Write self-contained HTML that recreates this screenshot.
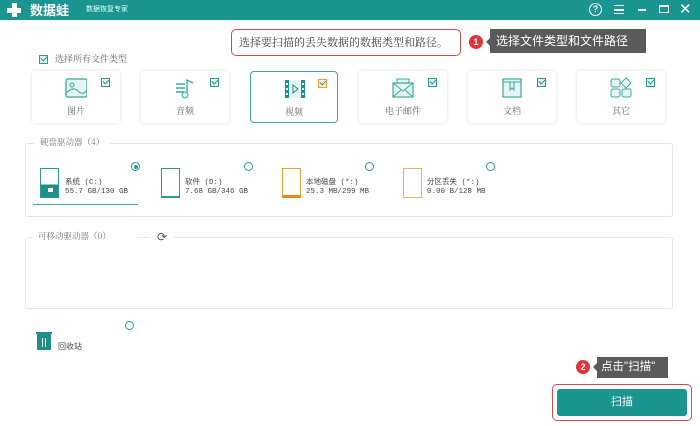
<!DOCTYPE html>
<html><head><meta charset="utf-8"><style>
*{margin:0;padding:0;box-sizing:border-box}
body{width:700px;height:426px;background:#fff;font-family:"Liberation Sans","Noto Sans CJK SC",sans-serif;position:relative;overflow:hidden;color:#555}
.a{position:absolute}
.tb{left:0;top:0;width:700px;height:20px;background:#1a958f}
.card{position:absolute;top:71px;width:88px;height:52px;border-radius:4px;box-shadow:0 0 4px rgba(0,0,0,.12);background:#fff}
.card .lb{position:absolute;left:0;right:0;top:33px;text-align:center;font-size:9px;color:#666;font-family:"Noto Serif CJK SC",serif}
.cb{position:absolute;right:10px;top:7px;width:9px;height:9px;border:1px solid #2a9a94;background:#dff2f0}
.cb:after{content:"";position:absolute;left:1px;top:0px;width:5px;height:3px;border-left:1.3px solid #2a8a84;border-bottom:1.3px solid #2a8a84;transform:rotate(-45deg)}
.ic{position:absolute;left:33px;top:6px;width:22px;height:22px}
.sec{position:absolute;border:1px solid #e6e6e6;border-radius:3px}
.st{position:absolute;background:#fff;font-size:8.5px;color:#777;padding:0 6px;font-family:"Noto Serif CJK SC",serif}
.rad{position:absolute;width:9px;height:9px;border:1px solid #2a9a94;border-radius:50%;background:#fff}
.dr{position:absolute;width:19px;height:30px;border:1px solid #2a9a94}
.dn{position:absolute;font-size:7.5px;color:#444;font-family:"Liberation Mono","Noto Sans CJK SC",monospace}
</style></head><body>
<div class="a tb"></div>
<div class="a" style="left:7px;top:3px;width:14px;height:14px">
<div class="a" style="left:5px;top:0;width:5px;height:14px;background:#fff"></div>
<div class="a" style="left:0;top:5px;width:14px;height:5px;background:#fff"></div></div>
<div class="a" style="left:30px;top:1px;color:#fff;font-size:13px;font-weight:bold;font-family:'Noto Sans CJK SC',sans-serif;line-height:17px">数据蛙</div>
<div class="a" style="left:86px;top:4px;color:#dff;font-size:7px;line-height:12px">数据恢复专家</div>
<div class="a" style="left:589px;top:3px;width:13px;height:13px;border:1.5px solid #fff;border-radius:50%;color:#fff;font-size:9px;text-align:center;line-height:10px;font-weight:bold">?</div>
<div class="a" style="left:614px;top:5px;width:10px;height:9px;border-top:1.5px solid #fff;border-bottom:1.5px solid #fff"></div>
<div class="a" style="left:614px;top:9px;width:10px;height:1.5px;background:#fff"></div>
<div class="a" style="left:638px;top:9px;width:8px;height:1.5px;background:#fff"></div>
<div class="a" style="left:659px;top:5px;width:10px;height:8px;border:1.5px solid #fff;border-top-width:2.5px"></div>
<div class="a" style="left:679px;top:0px;color:#fff;font-size:15px;line-height:19px">✕</div>

<div class="a" style="left:231px;top:29px;width:230px;height:27px;border:1.3px solid #d9484c;border-radius:5px;font-size:11px;color:#444;line-height:24px;padding-left:7px;font-family:'Noto Serif CJK SC',serif">选择要扫描的丢失数据的数据类型和路径。</div>
<div class="a" style="left:469px;top:35px;width:14px;height:14px;border-radius:50%;background:#e2343a;color:#fff;font-size:9px;text-align:center;line-height:14px;font-weight:bold">1</div>
<div class="a" style="left:486px;top:37px;border:5px solid transparent;border-right-color:#5a5a5a;border-left:0"></div>
<div class="a" style="left:490px;top:29px;width:156px;height:24px;background:#5a5a5a;color:#fff;font-size:12px;line-height:24px;padding-left:6px">选择文件类型和文件路径</div>

<div class="cb" style="left:39px;top:55px;right:auto"></div>
<div class="a" style="left:55px;top:52px;font-size:9px;color:#666;font-family:'Noto Serif CJK SC',serif">选择所有文件类型</div>

<div class="card" style="left:32px"><svg class="ic" viewBox="0 0 22 22"><rect x="1" y="2" width="21" height="18" rx="2" fill="#e4f5f3" stroke="#3aa9a2" stroke-width="1.3"/><circle cx="7" cy="8" r="2" fill="none" stroke="#3aa9a2"/><path d="M1 16 Q8 9 13 14 T22 13" fill="none" stroke="#3aa9a2"/></svg><div class="cb"></div><div class="lb">图片</div></div>
<div class="card" style="left:141px"><svg class="ic" viewBox="0 0 22 22"><path d="M2 7h9M2 11h9M2 15h9" stroke="#3aa9a2" stroke-width="1.5"/><path d="M13 17V3l6 3" fill="none" stroke="#3aa9a2" stroke-width="1.3"/><circle cx="11" cy="18" r="3" fill="#e4f5f3" stroke="#3aa9a2"/></svg><div class="cb"></div><div class="lb">音频</div></div>
<div class="card" style="left:250px;border:1px solid #3aa9a2;box-shadow:none"><svg class="ic" viewBox="0 0 22 22"><rect x="1" y="2" width="20" height="18" fill="#1f8f89"/><rect x="5" y="2" width="12" height="18" fill="#e4f5f3"/><path d="M9 7l5 4-5 4z" fill="none" stroke="#1f8f89"/><rect x="2" y="5" width="2" height="2" fill="#e4f5f3"/><rect x="2" y="10" width="2" height="2" fill="#e4f5f3"/><rect x="2" y="15" width="2" height="2" fill="#e4f5f3"/><rect x="18" y="5" width="2" height="2" fill="#e4f5f3"/><rect x="18" y="10" width="2" height="2" fill="#e4f5f3"/><rect x="18" y="15" width="2" height="2" fill="#e4f5f3"/></svg><div class="cb" style="border-color:#f0a030;background:#fff3df"></div><div class="lb">视频</div></div>
<div class="card" style="left:359px"><svg class="ic" viewBox="0 0 22 22"><rect x="5" y="2" width="12" height="6" fill="#e4f5f3" stroke="#3aa9a2"/><rect x="1" y="6" width="20" height="14" fill="#e4f5f3" stroke="#3aa9a2" stroke-width="1.2"/><path d="M1 6l10 8 10-8M1 20l8-7M21 20l-8-7" fill="none" stroke="#3aa9a2"/></svg><div class="cb"></div><div class="lb">电子邮件</div></div>
<div class="card" style="left:468px"><svg class="ic" viewBox="0 0 22 22"><rect x="2" y="2" width="18" height="18" fill="#e4f5f3" stroke="#3aa9a2" stroke-width="1.2"/><path d="M2 5h18M9 5v8l2-2 2 2V5" fill="none" stroke="#3aa9a2"/></svg><div class="cb"></div><div class="lb">文档</div></div>
<div class="card" style="left:577px"><svg class="ic" viewBox="0 0 22 22"><rect x="1" y="2" width="9" height="8" rx="2" fill="#e4f5f3" stroke="#3aa9a2"/><path d="M16 1l5 5-5 5-5-5z" fill="#fff" stroke="#3aa9a2"/><rect x="1" y="12" width="9" height="8" rx="2" fill="#e4f5f3" stroke="#3aa9a2"/><rect x="12" y="12" width="9" height="8" rx="2" fill="#e4f5f3" stroke="#3aa9a2"/></svg><div class="cb"></div><div class="lb">其它</div></div>

<div class="sec" style="left:25px;top:143px;width:648px;height:74px"></div>
<div class="st" style="left:34px;top:136px">硬盘驱动器（4）</div>
<div class="rad" style="left:131px;top:162px"><div class="a" style="left:1.5px;top:1.5px;width:4px;height:4px;border-radius:50%;background:#2a9a94"></div></div>
<div class="dr" style="left:40px;top:168px;background:linear-gradient(#fff 55%,#1f8f89 55%)"></div>
<div class="a" style="left:48px;top:188px;width:5px;height:4px;background:#fff"></div>
<div class="dn" style="left:65px;top:176px">系统 (C:)</div>
<div class="dn" style="left:65px;top:188px">55.7 GB/130 GB</div>
<div class="a" style="left:33px;top:204px;width:105px;height:1px;background:#3aa9a2"></div>
<div class="rad" style="left:244px;top:162px"></div>
<div class="dr" style="left:161px;top:168px;border-bottom-width:2px"></div>
<div class="dn" style="left:185px;top:176px">软件 (D:)</div>
<div class="dn" style="left:185px;top:188px">7.68 GB/346 GB</div>
<div class="rad" style="left:365px;top:162px"></div>
<div class="dr" style="left:282px;top:168px;border-color:#f0a030;border-bottom:3px solid #e88a10"></div>
<div class="dn" style="left:306px;top:176px">本地磁盘 (*:)</div>
<div class="dn" style="left:306px;top:188px">25.3 MB/299 MB</div>
<div class="rad" style="left:486px;top:162px"></div>
<div class="dr" style="left:403px;top:168px;border-color:#f0b060"></div>
<div class="dn" style="left:427px;top:176px">分区丢失 (*:)</div>
<div class="dn" style="left:427px;top:188px">0.00  B/128 MB</div>

<div class="sec" style="left:25px;top:237px;width:648px;height:72px"></div>
<div class="st" style="left:32px;top:230px;padding-right:26px">可移动驱动器（0）</div>
<div class="a" style="left:150px;top:229px;width:24px;height:16px;background:#fff;color:#555;font-size:12px;text-align:center;line-height:16px">⟳</div>

<div class="rad" style="left:125px;top:321px"></div>
<div class="a" style="left:37px;top:334px;width:14px;height:16px;background:#1f8f89;border-radius:1px"></div>
<div class="a" style="left:36px;top:332px;width:16px;height:2px;background:#1f8f89"></div>
<div class="a" style="left:42px;top:338px;width:1px;height:9px;background:#fff"></div><div class="a" style="left:45px;top:338px;width:1px;height:9px;background:#fff"></div>
<div class="a" style="left:58px;top:341px;font-size:8px;color:#444">回收站</div>

<div class="a" style="left:576px;top:360px;width:14px;height:14px;border-radius:50%;background:#e2343a;color:#fff;font-size:9px;text-align:center;line-height:14px;font-weight:bold">2</div>
<div class="a" style="left:593px;top:362px;border:5px solid transparent;border-right-color:#5a5a5a;border-left:0"></div>
<div class="a" style="left:597px;top:357px;width:71px;height:21px;background:#5a5a5a;color:#fff;font-size:11.5px;line-height:21px;padding-left:4px">点击"扫描"</div>
<div class="a" style="left:552px;top:384px;width:140px;height:37px;border:1.3px solid #d9484c;border-radius:5px"></div>
<div class="a" style="left:557px;top:389px;width:130px;height:27px;background:#1a958f;border-radius:3px;color:#fff;font-size:11px;text-align:center;line-height:27px">扫描</div>
</body></html>
